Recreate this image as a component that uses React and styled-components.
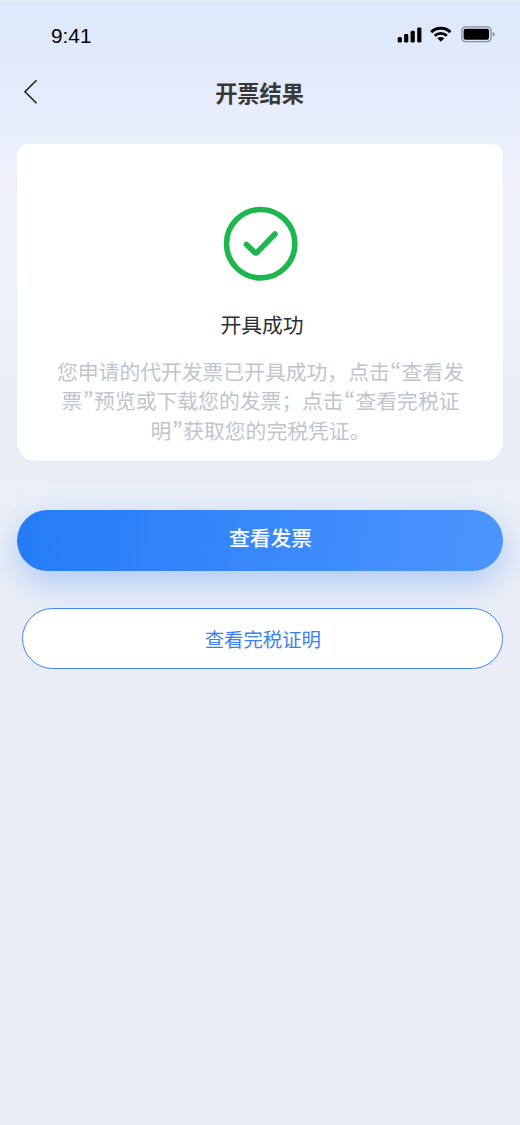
import React from "react";
import styled, { createGlobalStyle } from "styled-components";

const description = [
  "您申请的代开发票已开具成功，点击“查看发",
  "票”预览或下载您的发票；点击“查看完税证",
  "明”获取您的完税凭证。",
];

const SignalIcon = () => (
  <svg width="26" height="18" viewBox="0 0 26 18">
    <rect x="0.7" y="11" width="4.2" height="5.6" rx="1.4" />
    <rect x="7.1" y="8" width="4.2" height="8.6" rx="1.4" />
    <rect x="13.6" y="4.8" width="4.2" height="11.8" rx="1.4" />
    <rect x="20.2" y="1.4" width="4.2" height="15.2" rx="1.4" />
  </svg>
);

const WifiIcon = () => (
  <svg width="22" height="17" viewBox="0 0 22 17" fill="none" stroke="#000">
    <path d="M1.2 6.1 A14 14 0 0 1 20.4 6.1" strokeWidth="2.9" />
    <path d="M4.7 9.8 A9 9 0 0 1 16.9 9.8" strokeWidth="2.7" />
    <path d="M7.3 12.3 Q10.8 9.7 14.3 12.3 L10.8 15.8 Z" fill="#000" stroke="none" />
  </svg>
);

const BatteryIcon = () => (
  <svg width="34" height="17" viewBox="0 0 34 17">
    <rect x="0.8" y="0.8" width="29.2" height="14.8" rx="4" fill="none" stroke="#000" strokeOpacity="0.4" strokeWidth="1.3" />
    <rect x="2.6" y="2.7" width="25.4" height="11" rx="2" />
    <path d="M31.7 5.8 Q33.6 6.6 33.6 8.2 Q33.6 9.9 31.7 10.6 Z" fillOpacity="0.4" />
  </svg>
);

const BackIcon = () => (
  <svg width="16" height="26" viewBox="0 0 16 26" fill="none">
    <path d="M13.5 1.2 L2 12.7 L13.5 24.2" stroke="#222" strokeWidth="1.6" />
  </svg>
);

const SuccessIcon = () => (
  <svg width="76" height="76" viewBox="0 0 76 76" fill="none" stroke="#1eb74f">
    <circle cx="37.7" cy="37.7" r="34.2" strokeWidth="5.6" />
    <path
      d="M23.4 38.4 L31.8 46.6 Q32.8 47.3 33.8 46.6 L52 28"
      strokeWidth="5.6"
      strokeLinecap="round"
      strokeLinejoin="round"
    />
  </svg>
);

const App = () => {
  return (
    <Page>
      <GlobalStyle />
      <StatusBar>
        <Time>9:41</Time>
        <StatusIcons>
          <SignalIcon />
          <WifiIcon />
          <BatteryIcon />
        </StatusIcons>
      </StatusBar>
      <NavBar>
        <BackButton aria-label="返回">
          <BackIcon />
        </BackButton>
        <Title>开票结果</Title>
      </NavBar>
      <Card>
        <SuccessIcon />
        <ResultTitle>开具成功</ResultTitle>
        <Description>
          {description.map((line) => (
            <Line key={line}>
              {line.split(/([“”])/).map((part, i) =>
                i % 2 ? <Quote key={i}>{part}</Quote> : part
              )}
            </Line>
          ))}
        </Description>
      </Card>
      <Actions>
        <PrimaryButton>查看发票</PrimaryButton>
        <SecondaryButton>查看完税证明</SecondaryButton>
      </Actions>
    </Page>
  );
};

const GlobalStyle = createGlobalStyle`
  * {
    box-sizing: border-box;
  }

  body {
    margin: 0;
    background: #eaedf6;
  }
`;

const Page = styled.div`
  display: flex;
  flex-direction: column;
  width: 520px;
  height: 1125px;
  overflow: hidden;
  border-top: 1px solid #e9ebf3;
  font-family: "Noto Sans CJK SC", sans-serif;
  background: linear-gradient(
    180deg,
    #dce9fb 0,
    #e0eafb 55px,
    #e9eefb 125px,
    #eeeffb 175px,
    #ecf0f9 300px,
    #e9edf6 440px,
    #e9edf5 483px,
    #ebeff7 484px,
    #eaedf6 600px,
    #eaedf6 100%
  );
`;

const StatusBar = styled.div`
  display: flex;
  justify-content: space-between;
  height: 60px;
  padding: 23px 25px 0 51px;
`;

const Time = styled.div`
  font-family: "Liberation Sans", Arial, sans-serif;
  font-size: 20.8px;
  line-height: 23px;
  color: #000;
`;

const StatusIcons = styled.div`
  display: flex;
  align-items: flex-start;
  gap: 7px;
  padding-top: 2px;

  svg:last-child {
    margin-left: 2px;
  }
`;

const NavBar = styled.div`
  display: grid;
  grid-template-columns: 60px 1fr 60px;
  height: 83px;
`;

const BackButton = styled.button`
  display: flex;
  align-items: flex-start;
  padding: 18px 0 0 23px;
  border: none;
  background: none;
`;

const Title = styled.div`
  padding: 16px 1px 0 0;
  font-size: 22.2px;
  font-weight: 700;
  line-height: 31px;
  text-align: center;
  color: #383838;
`;

const Card = styled.div`
  display: flex;
  flex-direction: column;
  align-items: center;
  height: 317px;
  margin: 0 16.6px;
  padding: 62px 0 0 1px;
  border-radius: 11px 11px 19px 19px;
  background: #fff;
`;

const ResultTitle = styled.div`
  margin-top: 27px;
  padding-left: 3px;
  font-size: 20.8px;
  line-height: 30px;
  color: #2c2e35;
`;

const Description = styled.div`
  margin-top: 18px;
  font-size: 20.8px;
  line-height: 29.4px;
  text-align: center;
  color: #c1c4cf;
`;

const Line = styled.div`
  white-space: nowrap;
`;

const Quote = styled.span`
  display: inline-block;
  width: 0.57em;
  line-height: 1;
  text-align: center;
  font-weight: 500;
  font-feature-settings: "pwid";
`;

const Actions = styled.div`
  display: flex;
  flex-direction: column;
  gap: 37px;
  padding: 49px 16.6px 0;
`;

const Button = styled.button`
  height: 61px;
  border-radius: 31px;
  font-family: inherit;
`;

const PrimaryButton = styled(Button)`
  padding: 0 0 8px 21px;
  border: none;
  font-size: 20.8px;
  font-weight: 500;
  color: #fff;
  background: linear-gradient(100deg, #247cf6 0%, #3988fb 50%, #4c95ff 100%);
  box-shadow: 0 11px 33px rgba(45, 127, 247, 0.32);
`;

const SecondaryButton = styled(Button)`
  margin-left: 5.6px;
  padding: 0 0 1px;
  border: 1.4px solid #4086f5;
  font-size: 19.4px;
  color: #3a80f4;
  background: #fff;
`;

export default App;
